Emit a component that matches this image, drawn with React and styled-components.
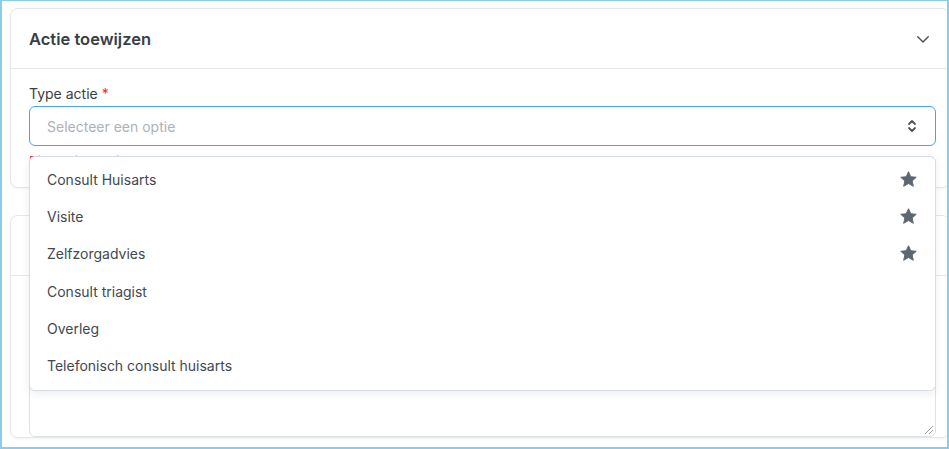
import React from "react";
import styled, { createGlobalStyle } from "styled-components";

const GlobalStyle = createGlobalStyle`
  * { box-sizing: border-box; }
  body {
    margin: 0;
    font-family: Inter, "Noto Sans", "Liberation Sans", sans-serif;
    background: #fff;
  }
`;

const options = [
  { id: 1, label: "Consult Huisarts", fav: true },
  { id: 2, label: "Visite", fav: true },
  { id: 3, label: "Zelfzorgadvies", fav: true },
  { id: 4, label: "Consult triagist" },
  { id: 5, label: "Overleg" },
  { id: 6, label: "Telefonisch consult huisarts" },
];

const ChevronDown = () => (
  <svg width="18" height="18" viewBox="0 0 24 24" fill="none" stroke="#454b52" strokeWidth="1.8" strokeLinecap="round" strokeLinejoin="round">
    <path d="M5 9l7 7 7-7" />
  </svg>
);

const UpDown = () => (
  <svg width="12" height="16" viewBox="0 0 12 16" fill="none" stroke="#4f565d" strokeWidth="1.8" strokeLinecap="round" strokeLinejoin="round">
    <path d="M3 6l3-3 3 3" />
    <path d="M3 10l3 3 3-3" />
  </svg>
);

const Star = () => (
  <svg width="19" height="19" viewBox="0 0 24 24" fill="#5d676f">
    <path d="M12 2.2l2.9 6.3 6.9.7-5.2 4.6 1.5 6.8L12 17.1l-6.1 3.5 1.5-6.8-5.2-4.6 6.9-.7z" strokeLinejoin="round" stroke="#5d676f" strokeWidth="1.2" />
  </svg>
);

const App = () => {
  return (
    <>
      <GlobalStyle />
      <Frame>
        <Card>
          <CardHeader>
            <h2>Actie toewijzen</h2>
            <ChevronDown />
          </CardHeader>
          <CardBody>
            <Label>
              Type actie <span>*</span>
            </Label>
            <SelectWrap>
              <Select>
                <Placeholder>Selecteer een optie</Placeholder>
                <UpDown />
              </Select>
              <ErrorText>Dit veld is verplicht</ErrorText>
              <Menu>
                {options.map((o) => (
                  <MenuItem key={o.id}>
                    <span>{o.label}</span>
                    {o.fav && <Star />}
                  </MenuItem>
                ))}
              </Menu>
            </SelectWrap>
          </CardBody>
        </Card>
        <Card>
          <CardHeader />
          <CardBody $pad={25}>
            <TextArea />
          </CardBody>
        </Card>
      </Frame>
    </>
  );
};

const Frame = styled.div`
  height: 449px;
  width: 949px;
  border: 2px solid #8ccbea;
  border-top-width: 1px;
  padding: 7px 0 0 8px;
  overflow: hidden;
  display: flex;
  flex-direction: column;
  gap: 27px;
`;

const Card = styled.div`
  flex-shrink: 0;
  width: 940px;
  border: 1px solid #e3e7ec;
  border-radius: 8px;
  background: #fff;
  box-shadow: 0 1px 3px rgba(20, 30, 40, 0.05);
`;

const CardHeader = styled.div`
  height: 60px;
  display: flex;
  align-items: center;
  justify-content: space-between;
  padding: 0 17px 0 18px;
  border-bottom: 1px solid #e3e7ec;
  h2 {
    margin: 0;
    font-size: 16.5px;
    font-weight: 600;
    color: #383e45;
  }
`;

const CardBody = styled.div`
  padding: ${(p) => p.$pad || 16}px 13px 0 18px;
`;

const Label = styled.div`
  font-size: 14px;
  color: #383e45;
  line-height: 18px;
  margin-bottom: 3px;
  span {
    color: #e0344c;
  }
`;

const SelectWrap = styled.div`
  position: relative;
  width: 907px;
`;

const Select = styled.div`
  height: 40px;
  border: 1px solid #4aa3e6;
  border-radius: 6px;
  display: flex;
  align-items: center;
  justify-content: space-between;
  padding: 0 17px 0 17px;
`;

const Placeholder = styled.span`
  font-size: 14px;
  color: #adb2b8;
`;

const ErrorText = styled.div`
  font-size: 12px;
  line-height: 15px;
  color: #e0344c;
  margin-top: 7px;
  padding-bottom: 19px;
`;

const Menu = styled.div`
  position: absolute;
  top: 50px;
  left: 0;
  right: 0;
  background: #fff;
  border: 1px solid #d7dde3;
  border-radius: 6px;
  box-shadow: 0 3px 8px rgba(30, 40, 50, 0.08);
  padding: 4px 0 6px;
  z-index: 10;
`;

const MenuItem = styled.div`
  height: 37.2px;
  display: flex;
  align-items: center;
  justify-content: space-between;
  padding: 0 17px 0 17px;
  font-size: 14px;
  color: #42484f;
`;

const TextArea = styled.div`
  height: 136px;
  border: 1px solid #dde2e7;
  border-radius: 6px;
  width: 907px;
  position: relative;
  &::after {
    content: "";
    position: absolute;
    right: 2px;
    bottom: 2px;
    width: 8px;
    height: 8px;
    background: linear-gradient(135deg, transparent 45%, #9aa0a6 45%, #9aa0a6 55%, transparent 55%, transparent 70%, #9aa0a6 70%, #9aa0a6 80%, transparent 80%);
  }
`;

export default App;
